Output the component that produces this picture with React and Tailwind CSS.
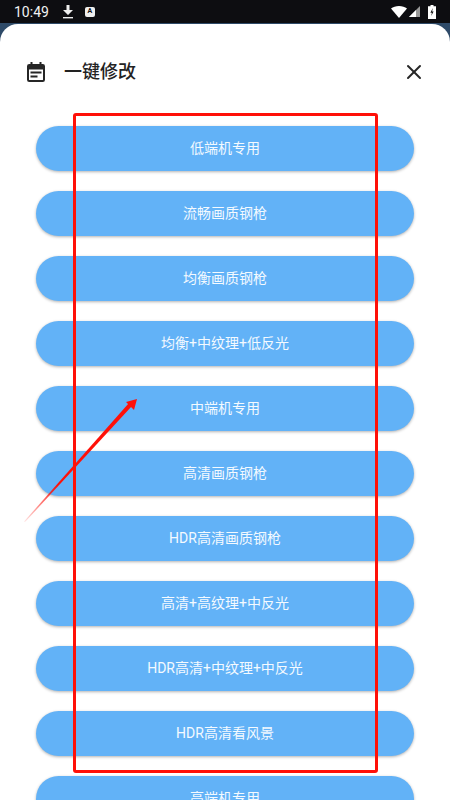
import React from 'react';
import { X } from 'lucide-react';

const presets = [
  '低端机专用',
  '流畅画质钢枪',
  '均衡画质钢枪',
  '均衡+中纹理+低反光',
  '中端机专用',
  '高清画质钢枪',
  'HDR高清画质钢枪',
  '高清+高纹理+中反光',
  'HDR高清+中纹理+中反光',
  'HDR高清看风景',
  '高端机专用',
];

const StatusBar = () => (
  <div className="h-[23px] bg-[#0d0d11] flex items-center pl-[14px] pr-[14px] text-white shrink-0">
    <span className="text-[14px] leading-none font-['Roboto',sans-serif] text-[#f2f2f2]">10:49</span>
    <svg className="ml-[14px]" width="10" height="14" viewBox="0 0 10 14" fill="#eee">
      <path d="M3.500 0h3v5H10L5 10 0 5h3.500z" />
      <rect x="0" y="12" width="10" height="1.400" />
    </svg>
    <div className="ml-[12px] w-[10px] h-[10px] rounded-[2px] bg-[#eee] flex items-center justify-center text-[7px] font-bold leading-none text-[#111] font-['Roboto',sans-serif]">
      A
    </div>
    <div className="ml-auto flex items-center">
      <svg width="16" height="12" viewBox="0 0 16 12" fill="#fff">
        <path d="M0 2.500C2 .9 4.800 0 8 0s6 .9 8 2.500L8 12z" />
      </svg>
      <svg className="ml-[2px]" width="11" height="11" viewBox="0 0 11 11">
        <path d="M11 0v11H0z" fill="#999" />
        <path d="M7 4v7H0z" fill="#fff" />
      </svg>
      <svg className="ml-[8px]" width="8" height="14" viewBox="0 0 8 14">
        <path d="M2.500 0h3v1.200H8V14H0V1.200h2.500z" fill="#fff" />
        <path d="M4.800 3 2.400 7.800h1.500L3.200 11l2.400-4.600H4.100z" fill="#111" />
      </svg>
    </div>
  </div>
);

const Header = () => (
  <div className="flex items-center h-[96px] pl-[27px] pr-[24px] shrink-0">
    <svg width="18" height="20" viewBox="0 0 18 20" fill="#262626">
      <path d="M3.500 0h2v2h7V0h2v2h1.300A2.200 2.200 0 0 1 18 4.200v13.600a2.200 2.200 0 0 1-2.200 2.200H2.200A2.200 2.200 0 0 1 0 17.800V4.200A2.200 2.200 0 0 1 2.200 2h1.300zM2 7.500v10a.5.5 0 0 0 .5.5h13a.5.5 0 0 0 .5-.5v-10z" />
      <rect x="3.500" y="9.500" width="11" height="2" />
      <rect x="3.500" y="13.500" width="7" height="2" />
    </svg>
    <span className="ml-[19px] text-[18px] font-medium text-[#222] leading-none">一键修改</span>
    <X className="ml-auto text-[#262626]" size={24} strokeWidth={2} />
  </div>
);

export default function App() {
  return (
    <div className="relative w-[450px] h-[800px] overflow-hidden bg-[#2e4a68] flex flex-col font-['Roboto','Noto_Sans_CJK_SC',sans-serif]">
      <StatusBar />
      <div className="flex-1 bg-white rounded-t-[18px] mt-px flex flex-col">
        <Header />
        <div className="flex flex-col gap-[20px] px-[36px] pt-[6px]">
          {presets.map((name) => (
            <button
              key={name}
              className="h-[45px] shrink-0 rounded-full bg-[#62b2f7] text-[#f4faff] text-[14px] shadow-[0_1px_3px_rgba(0,0,0,0.3)]"
            >
              {name}
            </button>
          ))}
        </div>
      </div>

      {/* annotation drawn on top of the screenshot */}
      <div className="absolute left-[73px] top-[113px] w-[305px] h-[660px] border-[3px] border-[#ff1008] rounded-[3px]" />
      <svg className="absolute left-0 top-0" width="450" height="800" viewBox="0 0 450 800">
        <defs>
          <linearGradient id="tail" gradientUnits="userSpaceOnUse" x1="24" y1="522" x2="58" y2="484">
            <stop offset="0" stopColor="#ff1008" stopOpacity="0.1" />
            <stop offset="1" stopColor="#ff1008" />
          </linearGradient>
        </defs>
        <path d="M24.500 521 24 522 25.500 521.500 131.500 406.500 128.500 403.500z" fill="url(#tail)" />
        <path d="M137 399 134 410 126 402z" fill="#ff1008" />
      </svg>
    </div>
  );
}
